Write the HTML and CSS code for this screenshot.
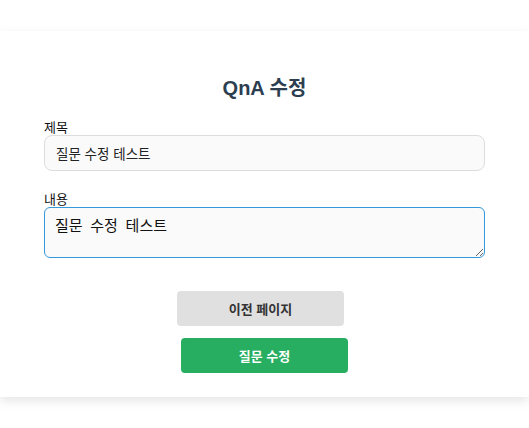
FILE: index.html
```html
<!DOCTYPE html>
<html lang="ko">
<head>
<meta charset="utf-8">
<title>QnA 수정</title>
<link rel="stylesheet" href="styles.css">
</head>
<body>
<div class="card">
  <h2 class="title">QnA 수정</h2>
  <form class="form">
    <div class="group">
      <label class="label" for="t">제목</label>
      <input class="input" id="t" type="text" value="질문 수정 테스트">
    </div>
    <div class="group">
      <label class="label" for="c">내용</label>
      <textarea class="textarea" id="c">질문 수정 테스트</textarea>
    </div>
    <div class="actions">
      <button type="button" class="btn btn-back">이전 페이지</button>
      <button type="button" class="btn btn-submit">질문 수정</button>
    </div>
  </form>
</div>
</body>
</html>
```
FILE: styles.css
```css
html, body {
  margin: 0;
  padding: 0;
  background: #ffffff;
}
body {
  font-family: "Liberation Sans", "Noto Sans CJK KR", sans-serif;
  padding: 31px 0 31px;
  min-height: 428px;
  box-sizing: border-box;
}
.card {
  background: #fff;
  box-shadow: 0 4px 10px rgba(0, 0, 0, 0.1);
  padding: 46px 44px 24px;
}
.title {
  margin: 0;
  text-align: center;
  font-family: "Liberation Sans", "Noto Sans CJK KR", sans-serif;
  font-size: 20px;
  line-height: 22px;
  font-weight: bold;
  color: #2c3e50;
}
.form {
  margin: 20px 0 0;
  display: flex;
  flex-direction: column;
}
.group {
  display: flex;
  flex-direction: column;
  margin-bottom: 20px;
}
.label {
  font-family: "Noto Sans CJK KR", sans-serif;
  font-size: 13px;
  line-height: 16px;
  color: #111;
}
.input {
  box-sizing: border-box;
  height: 36px;
  width: 100%;
  padding: 0 11px;
  border: 1px solid #dddddd;
  border-radius: 8px;
  background: #fafafa;
  font-family: "Noto Sans CJK KR", sans-serif;
  font-size: 13.5px;
  color: #222;
  outline: none;
  margin: 0;
}
.textarea {
  box-sizing: border-box;
  height: 51px;
  width: 100%;
  padding: 7px 10px 4px;
  border: 1px solid #3498db;
  border-radius: 6px;
  background: #fafafa;
  font-family: "Noto Sans CJK KR", sans-serif;
  font-size: 15px;
  line-height: 20px;
  word-spacing: 3.5px;
  color: #111;
  outline: none;
  resize: vertical;
  margin: 0;
}
.actions {
  display: flex;
  flex-direction: column;
  align-items: center;
  margin-top: 13px;
  gap: 12px;
}
.btn {
  width: 167px;
  height: 35px;
  border: none;
  border-radius: 4px;
  font-family: "Noto Sans CJK KR", sans-serif;
  font-size: 13px;
  font-weight: bold;
  cursor: pointer;
  margin: 0;
}
.btn-back {
  background: #e0e0e0;
  color: #333;
  margin-right: 8px;
}
.btn-submit {
  background: #27ae60;
  color: #fff;
}
```
